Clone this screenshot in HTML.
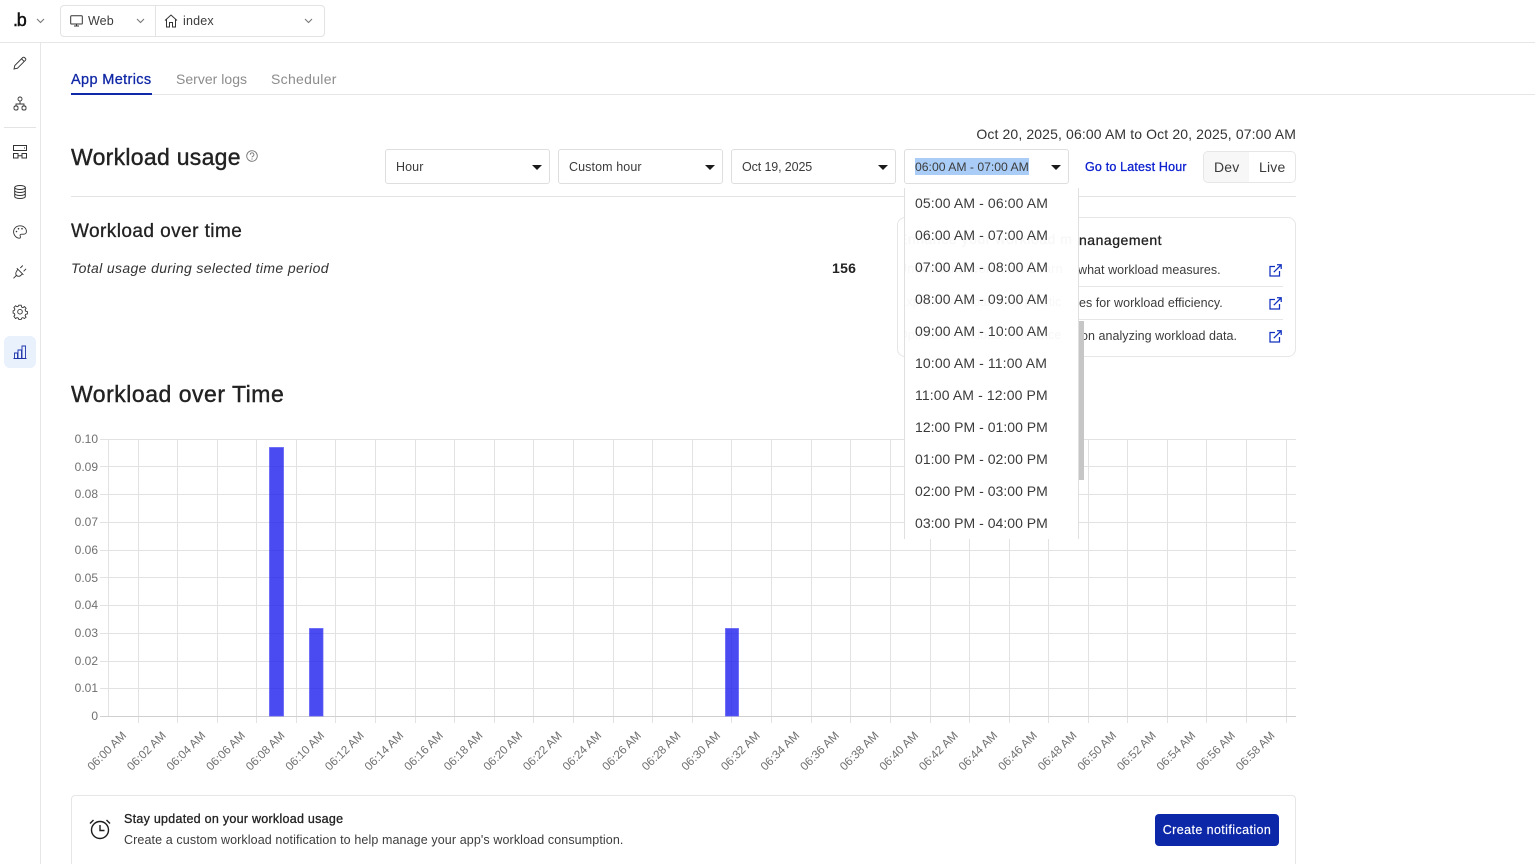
<!DOCTYPE html>
<html lang="en">
<head>
<meta charset="utf-8">
<title>Workload usage</title>
<style>
html,body{margin:0;padding:0;background:#fff;height:864px;overflow:hidden;}
body{width:1535px;position:relative;font-family:"Liberation Sans",sans-serif;color:#2b2b2b;}
.a{position:absolute;white-space:nowrap;}
.m{-webkit-text-stroke:.3px currentColor;}
.sel{position:absolute;top:149px;width:163px;height:33px;border:1px solid #dedede;border-radius:3px;background:#fff;}
.sel span{position:absolute;left:10px;top:9px;font-size:12.5px;line-height:17px;color:#3c3c3c;letter-spacing:.1px;white-space:nowrap;}
.sel i{position:absolute;left:145.5px;top:15px;width:0;height:0;border-left:5px solid transparent;border-right:5px solid transparent;border-top:5px solid #1a1a1a;}
.opt{position:absolute;left:10px;font-size:14px;line-height:16px;color:#3b3b3b;letter-spacing:.12px;white-space:nowrap;}
.opt.p{letter-spacing:.03px;}
.ghost{position:absolute;font-size:12.5px;line-height:15px;color:#f7f7f7;white-space:nowrap;}
.row{position:absolute;font-size:12.5px;line-height:15px;color:#3c3c3c;letter-spacing:.04px;white-space:nowrap;}
svg{position:absolute;overflow:visible;}
</style>
</head>
<body>

<!-- top bar -->
<div class="a" style="left:0;top:42px;width:1535px;height:1px;background:#e6e6e6"></div>
<div class="a" style="left:40px;top:43px;width:1px;height:821px;background:#e6e6e6"></div>

<div class="a" style="left:13px;top:11px;font-size:18px;line-height:18px;color:#111;letter-spacing:-1.2px;-webkit-text-stroke:.45px #111">.b</div>
<svg style="left:36px;top:18px" width="9" height="6" viewBox="0 0 9 6"><path d="M1 1l3.500 3.500L8 1" fill="none" stroke="#777" stroke-width="1.100"/></svg>

<div class="a" style="left:60px;top:5px;width:263px;height:30px;border:1px solid #e3e3e3;border-radius:4px"></div>
<div class="a" style="left:155px;top:6px;width:1px;height:30px;background:#e3e3e3"></div>
<svg style="left:70px;top:15px" width="13" height="12" viewBox="0 0 13 12"><path d="M1.500 .8h10a.8.8 0 0 1 .8.8v6.600a.8.8 0 0 1-.8.8h-10a.8.8 0 0 1-.8-.8V1.600a.8.8 0 0 1 .8-.8zM4 11h5M6.500 9v2" fill="none" stroke="#333" stroke-width="1"/></svg>
<div class="a" style="left:88px;top:14px;font-size:12.500px;line-height:15px;color:#3c3c3c;letter-spacing:.1px">Web</div>
<svg style="left:136px;top:18px" width="9" height="6" viewBox="0 0 9 6"><path d="M1 1l3.500 3.500L8 1" fill="none" stroke="#777" stroke-width="1.100"/></svg>
<svg style="left:164px;top:14px" width="14" height="14" viewBox="0 0 14 14"><path d="M1 6.500L7 1l6 5.500M2.500 5.500V13h3V8.500h3V13h3V5.500" fill="none" stroke="#333" stroke-width="1"/></svg>
<div class="a" style="left:183px;top:14px;font-size:12.500px;line-height:15px;color:#3c3c3c;letter-spacing:.2px">index</div>
<svg style="left:304px;top:18px" width="9" height="6" viewBox="0 0 9 6"><path d="M1 1l3.500 3.500L8 1" fill="none" stroke="#777" stroke-width="1.100"/></svg>

<!-- sidebar icons -->
<svg style="left:13px;top:56px" width="14" height="14" viewBox="0 0 14 14"><path d="M1 13l.8-3.500L9.800 1.500a1.200 1.200 0 0 1 1.700 0l1 1a1.200 1.200 0 0 1 0 1.700L4.500 12.200zM8.500 2.800l2.700 2.700" fill="none" stroke="#333" stroke-width=".9"/></svg>
<svg style="left:13px;top:96px" width="14" height="15" viewBox="0 0 14 15"><circle cx="7" cy="3" r="2" fill="none" stroke="#333" stroke-width=".9"/><rect x="1" y="10" width="4" height="4" rx="1.500" fill="none" stroke="#333" stroke-width=".9"/><rect x="9" y="10" width="4" height="4" rx="1.500" fill="none" stroke="#333" stroke-width=".9"/><path d="M7 5v3M3 10V8h8v2" fill="none" stroke="#333" stroke-width=".9"/></svg>
<div class="a" style="left:4px;top:127px;width:32px;height:1px;background:#e3e3e3"></div>
<svg style="left:13px;top:145px" width="14" height="14" viewBox="0 0 14 14"><rect x=".5" y=".5" width="13" height="5" fill="none" stroke="#333"/><rect x=".5" y="8.500" width="4.500" height="4.500" fill="none" stroke="#333"/><rect x="9" y="8.500" width="4.500" height="4.500" fill="none" stroke="#333"/><path d="M5 10.700h4M11 3h1" fill="none" stroke="#333"/></svg>
<svg style="left:14px;top:185px" width="12" height="14" viewBox="0 0 12 14"><ellipse cx="6" cy="2.500" rx="5.300" ry="2" fill="none" stroke="#333"/><path d="M.7 2.500v9c0 1.100 2.400 2 5.300 2s5.300-.9 5.300-2v-9M.7 5.500c0 1.100 2.400 2 5.300 2s5.300-.9 5.300-2M.7 8.500c0 1.100 2.400 2 5.300 2s5.300-.9 5.300-2" fill="none" stroke="#333"/></svg>
<svg style="left:13px;top:225px" width="14" height="14" viewBox="0 0 14 14"><path d="M7 .8C3.300.8.600 3.400.600 6.800c0 3.500 2.900 6.400 5.600 6.400 1.500 0 1.400-1.300 1-2.100-.5-1 .2-1.900 1.300-1.900h2.200c1.500 0 2.700-1.100 2.700-2.700C13.400 3.200 10.700.8 7 .8z" fill="none" stroke="#333" stroke-width=".9"/><circle cx="3.500" cy="6.500" r=".8" fill="#333"/><circle cx="5.500" cy="3.700" r=".8" fill="#333"/><circle cx="9" cy="3.700" r=".8" fill="#333"/></svg>
<svg style="left:13px;top:264px" width="14" height="15" viewBox="0 0 14 15"><path d="M.5 14.300l3.300-3.300M4.800 5.200l4.600 4.600-1.700 1.700c-1.100 1.100-3 1.100-4.100 0s-1.100-3 0-4.100zM3.800 4.200l6.600 6.600M7.300 4L9.800 1.500M10.600 7.300l2.500-2.500" fill="none" stroke="#333" stroke-width=".9"/></svg>
<svg style="left:13px;top:304px" width="14" height="15" viewBox="0 0 14 14"><path d="M5.800.7h2.400l.4 1.800 1.300.6 1.600-1 1.600 1.700-1 1.500.6 1.400 1.700.4v2.300l-1.700.4-.6 1.400 1 1.500-1.600 1.300-1.600-.9-1.300.6-.4 1.200H5.800l-.4-1.200-1.300-.6-1.600.9L.9 11.900l1-1.500-.6-1.400-1.200-.4V6.300L1.300 5.900l.6-1.400-1-1.500 1.600-1.700 1.600 1 1.300-.6z" fill="none" stroke="#333" stroke-width=".9"/><circle cx="7" cy="7.200" r="2.300" fill="none" stroke="#333" stroke-width=".9"/></svg>
<div class="a" style="left:4px;top:336px;width:32px;height:32px;background:#e9f1fd;border-radius:6px"></div>
<svg style="left:13px;top:345px" width="14" height="14" viewBox="0 0 14 14"><path d="M.5 13.500h13M1.500 13V8h3v5M5 13V5h3.500v8M9 13V1h3.500v12" fill="none" stroke="#1c33aa" stroke-width=".9"/></svg>

<!-- tabs -->
<div class="a" style="left:71px;top:94px;width:1464px;height:1px;background:#e6e6e6"></div>
<div class="a" style="left:71px;top:93px;width:81px;height:2px;background:#0e2aa8"></div>
<div class="a m" style="left:71px;top:72px;font-size:14.500px;line-height:16px;color:#1129a6;letter-spacing:.36px">App Metrics</div>
<div class="a" style="left:176px;top:71px;font-size:14px;line-height:16px;color:#8c8c8c;letter-spacing:.02px">Server logs</div>
<div class="a" style="left:271px;top:71px;font-size:14px;line-height:16px;color:#8c8c8c;letter-spacing:.3px">Scheduler</div>

<!-- header -->
<div class="a m" style="left:71px;top:144px;font-size:23px;line-height:27px;color:#222;letter-spacing:.29px;-webkit-text-stroke:.4px #222">Workload usage</div>
<svg style="left:246px;top:150px" width="12" height="12" viewBox="0 0 12 12"><circle cx="6" cy="6" r="5.300" fill="none" stroke="#777" stroke-width=".9"/><path d="M4.300 4.700A1.800 1.800 0 1 1 6.500 6.400c-.4.200-.5.500-.5 1" fill="none" stroke="#777" stroke-width=".9"/><circle cx="6" cy="9" r=".6" fill="#777"/></svg>
<div class="a" style="right:239px;top:126px;font-size:14px;line-height:16px;color:#333;letter-spacing:.125px">Oct 20, 2025, 06:00 AM to Oct 20, 2025, 07:00 AM</div>

<div class="sel" style="left:385px"><span>Hour</span><i></i></div>
<div class="sel" style="left:558px"><span style="letter-spacing:.1px">Custom hour</span><i></i></div>
<div class="sel" style="left:731px"><span style="letter-spacing:-.12px">Oct 19, 2025</span><i></i></div>
<div class="sel" style="left:904px"><span style="background:#a9cdf6;height:17px;line-height:19px;top:8px;left:10px;width:114px;font-size:12.200px;letter-spacing:0;overflow:hidden">06:00 AM - 07:00 AM</span><i></i></div>

<div class="a m" style="left:1085px;top:160px;font-size:12.500px;line-height:15px;color:#0c20cf;letter-spacing:.18px">Go to Latest Hour</div>
<div class="a" style="left:1203px;top:151px;width:91px;height:30px;border:1px solid #e6e6e6;border-radius:5px"></div>
<div class="a" style="left:1204px;top:152px;width:45px;height:30px;background:#f7f7f7;border-radius:4px 0 0 4px"></div>
<div class="a" style="left:1214px;top:159px;font-size:14px;line-height:16px;color:#3a3a3a;letter-spacing:.2px">Dev</div>
<div class="a" style="left:1259px;top:159px;font-size:14px;line-height:16px;color:#3a3a3a;letter-spacing:.2px">Live</div>

<div class="a" style="left:71px;top:196px;width:1225px;height:1px;background:#e3e3e3"></div>

<div class="a m" style="left:71px;top:221px;font-size:19px;line-height:22px;color:#222;letter-spacing:.44px">Workload over time</div>
<div class="a" style="left:71px;top:260px;font-size:14px;line-height:16px;font-style:italic;color:#333;letter-spacing:.36px">Total usage during selected time period</div>
<div class="a" style="left:832px;top:260px;font-size:14px;line-height:16px;font-weight:700;color:#222;letter-spacing:.3px">156</div>

<!-- help card -->
<div class="a" style="left:897px;top:217px;width:397px;height:138px;border:1px solid #e6e6e6;border-radius:8px"></div>
<div class="a m" style="left:1079px;top:232px;font-size:14px;line-height:16px;color:#222;letter-spacing:.52px">nanagement</div>
<div class="row" style="left:1078px;top:263px">what workload measures.</div>
<div class="row" style="left:1079px;top:296px">es for workload efficiency.</div>
<div class="row" style="left:1081px;top:329px">on analyzing workload data.</div>
<div class="a" style="left:1079px;top:286px;width:204px;height:1px;background:#e6e6e6"></div>
<div class="a" style="left:1079px;top:319px;width:204px;height:1px;background:#e6e6e6"></div>
<svg style="left:1268.500px;top:263.500px" width="13" height="13" viewBox="0 0 13 13"><path d="M6 2.500H1v9.500h9.500V7M4.800 8.200L12 1M8 .8h4.200V5" fill="none" stroke="#1030c0" stroke-width="1.250"/></svg>
<svg style="left:1268.500px;top:296.500px" width="13" height="13" viewBox="0 0 13 13"><path d="M6 2.500H1v9.500h9.500V7M4.800 8.200L12 1M8 .8h4.200V5" fill="none" stroke="#1030c0" stroke-width="1.250"/></svg>
<svg style="left:1268.500px;top:329.500px" width="13" height="13" viewBox="0 0 13 13"><path d="M6 2.500H1v9.500h9.500V7M4.800 8.200L12 1M8 .8h4.200V5" fill="none" stroke="#1030c0" stroke-width="1.250"/></svg>

<!-- headline -->
<div class="a m" style="left:71px;top:381px;font-size:23px;line-height:27px;color:#222;letter-spacing:.51px;-webkit-text-stroke:.4px #222">Workload over Time</div>

<!-- chart -->
<svg style="left:0;top:0" width="1535" height="864" viewBox="0 0 1535 864">
<g stroke="#e2e2e2" stroke-width="1" fill="none">
<path d="M100 439.500H1296M100 466.500H1296M100 494.500H1296M100 522.500H1296M100 550.500H1296M100 577.500H1296M100 605.500H1296M100 633.500H1296M100 661.500H1296M100 688.500H1296"/>
<path d="M108.500 439V716M138.500 439V723M177.500 439V723M217.500 439V723M256.500 439V723M296.500 439V723M335.500 439V723M375.500 439V723M415.500 439V723M454.500 439V723M494.500 439V723M533.500 439V723M573.500 439V723M613.500 439V723M652.500 439V723M692.500 439V723M731.500 439V723M771.500 439V723M811.500 439V723M850.500 439V723M890.500 439V723M930.500 439V723M969.500 439V723M1009.500 439V723M1048.500 439V723M1088.500 439V723M1127.500 439V723M1167.500 439V723M1206.500 439V723M1246.500 439V723M1286.500 439V723"/>
</g>
<path d="M100 716.500H1296" stroke="#d0d0d0" fill="none"/>
<g fill="rgba(24,24,238,.78)" stroke="rgba(90,90,245,.7)" stroke-width="1">
<rect x="269.500" y="447.500" width="14" height="268.500"/>
<rect x="309.500" y="628.500" width="13.500" height="87.500"/>
<rect x="725.500" y="628.500" width="13" height="87.500"/>
</g>
<g font-family="'Liberation Sans',sans-serif" font-size="12" fill="#707070" text-anchor="end">
<text x="98" y="443">0.10</text><text x="98" y="471">0.09</text><text x="98" y="498">0.08</text><text x="98" y="526">0.07</text><text x="98" y="554">0.06</text><text x="98" y="582">0.05</text><text x="98" y="609">0.04</text><text x="98" y="637">0.03</text><text x="98" y="665">0.02</text><text x="98" y="692">0.01</text><text x="98" y="720">0</text>
</g>
<g font-family="'Liberation Sans',sans-serif" font-size="11.700" fill="#707070" text-anchor="end" transform="translate(1,1.200)">
<text transform="translate(126,735) rotate(-45)">06:00 AM</text>
<text transform="translate(165.600,735) rotate(-45)">06:02 AM</text>
<text transform="translate(205.200,735) rotate(-45)">06:04 AM</text>
<text transform="translate(244.800,735) rotate(-45)">06:06 AM</text>
<text transform="translate(284.400,735) rotate(-45)">06:08 AM</text>
<text transform="translate(324,735) rotate(-45)">06:10 AM</text>
<text transform="translate(363.600,735) rotate(-45)">06:12 AM</text>
<text transform="translate(403.200,735) rotate(-45)">06:14 AM</text>
<text transform="translate(442.800,735) rotate(-45)">06:16 AM</text>
<text transform="translate(482.400,735) rotate(-45)">06:18 AM</text>
<text transform="translate(522,735) rotate(-45)">06:20 AM</text>
<text transform="translate(561.600,735) rotate(-45)">06:22 AM</text>
<text transform="translate(601.200,735) rotate(-45)">06:24 AM</text>
<text transform="translate(640.800,735) rotate(-45)">06:26 AM</text>
<text transform="translate(680.400,735) rotate(-45)">06:28 AM</text>
<text transform="translate(720,735) rotate(-45)">06:30 AM</text>
<text transform="translate(759.600,735) rotate(-45)">06:32 AM</text>
<text transform="translate(799.200,735) rotate(-45)">06:34 AM</text>
<text transform="translate(838.800,735) rotate(-45)">06:36 AM</text>
<text transform="translate(878.400,735) rotate(-45)">06:38 AM</text>
<text transform="translate(918,735) rotate(-45)">06:40 AM</text>
<text transform="translate(957.600,735) rotate(-45)">06:42 AM</text>
<text transform="translate(997.200,735) rotate(-45)">06:44 AM</text>
<text transform="translate(1036.800,735) rotate(-45)">06:46 AM</text>
<text transform="translate(1076.400,735) rotate(-45)">06:48 AM</text>
<text transform="translate(1116,735) rotate(-45)">06:50 AM</text>
<text transform="translate(1155.600,735) rotate(-45)">06:52 AM</text>
<text transform="translate(1195.200,735) rotate(-45)">06:54 AM</text>
<text transform="translate(1234.800,735) rotate(-45)">06:56 AM</text>
<text transform="translate(1274.400,735) rotate(-45)">06:58 AM</text>
</g>
</svg>

<!-- dropdown -->
<div class="a" style="left:904px;top:188px;width:173px;height:351px;background:#fff;border-left:1px solid #e0e0e0;border-right:1px solid #e0e0e0;overflow:hidden">
<div class="ghost" style="left:-7px;top:44px;font-size:14px;-webkit-text-stroke:.3px #f7f7f7;letter-spacing:.55px">Enhance your workload m</div>
<div class="ghost" style="left:-7px;top:74px;letter-spacing:.3px">Understand workload: Learn</div>
<div class="ghost" style="left:-7px;top:107px">Explore workload best practic</div>
<div class="ghost" style="left:-7px;top:140px">Optimize workload: Guidance</div>
<div class="opt" style="top:7px">05:00 AM - 06:00 AM</div>
<div class="opt" style="top:39px">06:00 AM - 07:00 AM</div>
<div class="opt" style="top:71px">07:00 AM - 08:00 AM</div>
<div class="opt" style="top:103px">08:00 AM - 09:00 AM</div>
<div class="opt" style="top:135px">09:00 AM - 10:00 AM</div>
<div class="opt" style="top:167px">10:00 AM - 11:00 AM</div>
<div class="opt" style="top:199px">11:00 AM - 12:00 PM</div>
<div class="opt p" style="top:231px">12:00 PM - 01:00 PM</div>
<div class="opt p" style="top:263px">01:00 PM - 02:00 PM</div>
<div class="opt p" style="top:295px">02:00 PM - 03:00 PM</div>
<div class="opt p" style="top:327px">03:00 PM - 04:00 PM</div>
</div>
<div class="a" style="left:1079px;top:321px;width:5px;height:159px;background:#c6c6c6"></div>

<!-- notification card -->
<div class="a" style="left:71px;top:795px;width:1223px;height:69px;border:1px solid #e6e6e6;border-bottom:none;border-radius:4px 4px 0 0"></div>
<svg style="left:89px;top:818px" width="22" height="22" viewBox="0 0 22 22"><circle cx="11" cy="12" r="8.500" fill="none" stroke="#1c1c1c" stroke-width="1.400"/><path d="M11 7v5.500h4.500M1 5.500L4.500 2M21 5.500L17.500 2" fill="none" stroke="#1c1c1c" stroke-width="1.400"/></svg>
<div class="a m" style="left:124px;top:812px;font-size:12.500px;line-height:15px;color:#222;letter-spacing:.27px">Stay updated on your workload usage</div>
<div class="a" style="left:124px;top:833px;font-size:12.500px;line-height:15px;color:#3c3c3c;letter-spacing:.11px">Create a custom workload notification to help manage your app's workload consumption.</div>
<div class="a m" style="left:1155px;top:814px;width:124px;height:32px;background:#0c27a8;border-radius:4px;color:#fff;font-size:12.500px;line-height:32px;text-align:center;letter-spacing:.41px;-webkit-text-stroke:.15px #fff">Create notification</div>

</body>
</html>
